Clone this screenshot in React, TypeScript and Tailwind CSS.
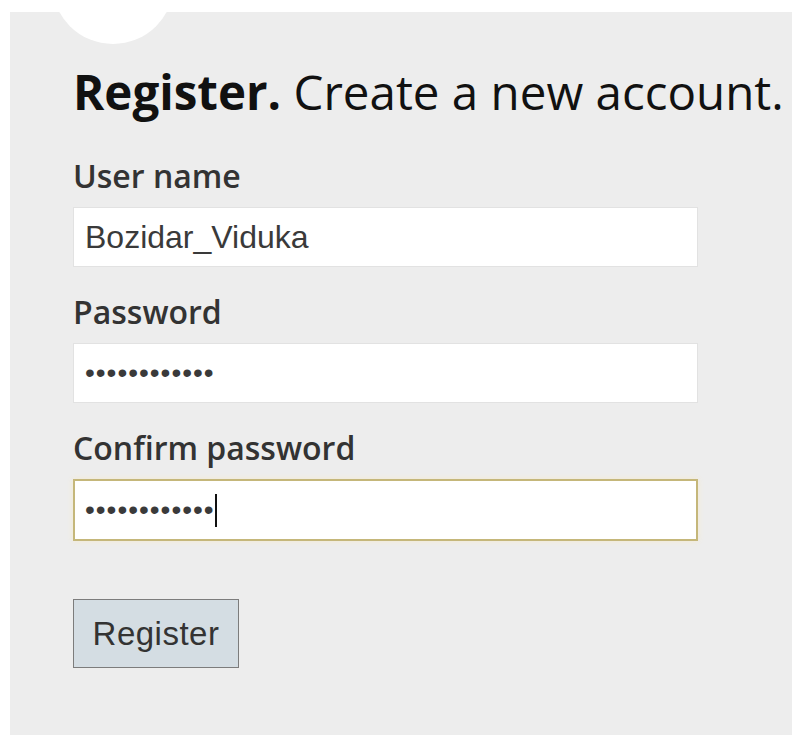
import React from 'react';

function Field({ label, children, focused = false }: { label: string; children: React.ReactNode; focused?: boolean }) {
  return (
    <div className="flex flex-col">
      <label className="font-['Open_Sans',sans-serif] font-semibold text-[32px] leading-[26px] text-[#333333] mb-[18px]">{label}</label>
      <div
        className={
          focused
            ? 'w-[625px] h-[62px] bg-white border-2 border-[#c5b77a] shadow-[0_0_6px_#f4ead0] flex items-center pl-[10px]'
            : 'w-[625px] h-[60px] bg-white border border-[#e2e2e2] flex items-center pl-[11px]'
        }
      >
        {children}
      </div>
    </div>
  );
}

function Dots() {
  return <span className="text-[28px] tracking-[1px]">••••••••••••</span>;
}

export default function App() {
  return (
    <div className="min-h-[735px] bg-white pt-[12px] pl-[10px]">
      <div className="relative overflow-hidden min-h-[723px] bg-[#ededed] pl-[63px] pt-[55px]">
        {/* avatar circle peeking from the top */}
        <div className="absolute left-[42px] top-[-90px] w-[122px] h-[122px] rounded-full bg-white" />

        <h1 className="font-['Open_Sans',sans-serif] text-[47.5px] leading-[50px] text-[#111111] whitespace-nowrap mb-[46px]">
          <span className="font-bold">Register.</span> Create a new account.
        </h1>

        <div className="flex flex-col gap-[32px] font-['Liberation_Sans',Arial,sans-serif] text-[32px] text-[#3a3a3a]">
          <Field label="User name">
            <span>Bozidar_Viduka</span>
          </Field>
          <Field label="Password">
            <Dots />
          </Field>
          <Field label="Confirm password" focused>
            <Dots />
            <span className="inline-block w-[2px] h-[33px] bg-[#111111]" />
          </Field>
        </div>

        <button className="mt-[58px] w-[166px] h-[69px] bg-[#d4dde3] border border-[#7c7c7c] font-['Liberation_Sans',Arial,sans-serif] text-[33px] tracking-[0.5px] text-[#333333]">
          Register
        </button>
      </div>
    </div>
  );
}
